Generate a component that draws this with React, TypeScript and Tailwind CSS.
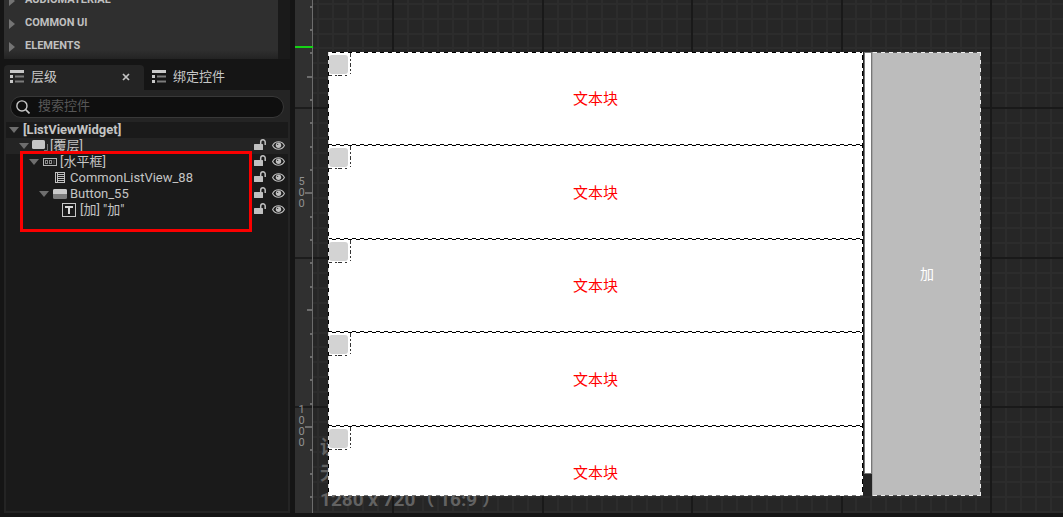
import React from "react";

const FONT = "font-['Roboto','Noto_Sans_CJK_SC',sans-serif]";

function ListIcon() {
  return (
    <svg width="14" height="13" viewBox="0 0 14 13" aria-hidden="true" className="shrink-0">
      <path d="M0 0h14v3H0zM0 5h3v3H0zM0 10h3v3H0z" fill="#c8c8c8" />
      <path d="M5 5.5h9v2H5zM5 10.5h9v2H5z" fill="#7c7c7c" />
    </svg>
  );
}

function Chevron() {
  return (
    <svg width="10" height="6" viewBox="0 0 10 6" aria-hidden="true">
      <path d="M0 0h10L5 6z" fill="#6e6e6e" />
    </svg>
  );
}

function OverlayIcon() {
  return (
    <svg width="14" height="12" viewBox="0 0 14 12" aria-hidden="true" className="overflow-visible">
      <rect x="0" y="0" width="13" height="9" rx="1.5" fill="#c6c6c6" />
      <path d="M15.500 4v6.500H12" fill="none" stroke="#777" />
    </svg>
  );
}

function HorizontalBoxIcon() {
  return (
    <svg width="14" height="12" viewBox="0 0 14 12" aria-hidden="true" className="overflow-visible">
      <rect x="1.500" y="2.500" width="13" height="7" fill="none" stroke="#b4b4b4" />
      <rect x="3.500" y="4.500" width="2" height="3" fill="none" stroke="#8c8c8c" />
      <rect x="7.500" y="4.500" width="2" height="3" fill="none" stroke="#8c8c8c" />
      <path d="M12 4v4" stroke="#555" />
    </svg>
  );
}

function ListViewIcon() {
  return (
    <svg width="14" height="12" viewBox="0 0 14 12" aria-hidden="true" className="overflow-visible">
      <rect x="3.500" y="0.500" width="9" height="10" fill="none" stroke="#c0c0c0" />
      <path d="M5.500 0v11M6 2.500h6M6 4.500h6M6 6.500h6M6 8.500h6" stroke="#c0c0c0" />
    </svg>
  );
}

function ButtonIcon() {
  return (
    <svg width="14" height="12" viewBox="0 0 14 12" aria-hidden="true" className="overflow-visible">
      <rect x="1" y="1" width="14" height="10" rx="1.5" fill="#7d7d7d" />
      <path d="M2.500 1h11A1.500 1.500 0 0 1 15 2.500V6H1V2.500A1.500 1.500 0 0 1 2.500 1z" fill="#cacaca" />
    </svg>
  );
}

function TextIcon() {
  return (
    <svg width="14" height="14" viewBox="0 0 14 14" aria-hidden="true" className="overflow-visible">
      <rect x="0.500" y="0.500" width="13" height="13" fill="none" stroke="#c8c8c8" />
      <path d="M3 3h8v2H8V11H6V5H3z" fill="#d8d8d8" />
    </svg>
  );
}

function UnlockIcon() {
  return (
    <svg width="12" height="11" viewBox="0 0 12 11" aria-hidden="true">
      <rect x="0" y="5" width="9" height="6" rx="0.5" fill="#c0c0c0" />
      <path d="M6.700 5.500V3a2.200 2.200 0 0 1 4.500 0v3" fill="none" stroke="#c0c0c0" strokeWidth="1.500" />
    </svg>
  );
}

function EyeIcon() {
  return (
    <svg width="13" height="9" viewBox="0 0 13 9" aria-hidden="true">
      <path d="M.6 4.500C3-.5 10-.5 12.400 4.500 10 9.500 3 9.500.6 4.500z" fill="none" stroke="#c0c0c0" strokeWidth="1.100" />
      <circle cx="6.500" cy="4.300" r="2.700" fill="#c0c0c0" />
      <circle cx="5.600" cy="3.400" r="0.700" fill="#444" />
    </svg>
  );
}

type Node = {
  label: string;
  indent: string;
  open?: boolean;
  icon?: React.ReactNode;
  root?: boolean;
  lit?: boolean;
};

const NODES: Node[] = [
  { label: "[ListViewWidget]", indent: "pl-[3px]", open: true, root: true },
  { label: "[覆层]", indent: "pl-[13px]", open: true, icon: <OverlayIcon />, lit: true },
  { label: "[水平框]", indent: "pl-[23px]", open: true, icon: <HorizontalBoxIcon /> },
  { label: "CommonListView_88", indent: "pl-[33px]", icon: <ListViewIcon /> },
  { label: "Button_55", indent: "pl-[33px]", open: true, icon: <ButtonIcon /> },
  { label: '[加] "加"', indent: "pl-[43px]", icon: <TextIcon /> },
];

function TreeRow({ node }: { node: Node }) {
  return (
    <li
      role="treeitem"
      className={`flex h-4 items-center pr-[3px] text-[13px] leading-4 text-[#c4c4c4] ${node.indent} ${node.lit ? "bg-[#242424]" : ""}`}
    >
      <span className="flex w-[10px] shrink-0 justify-center">{node.open && <Chevron />}</span>
      {node.icon && <span className="ml-[3px] flex w-[14px] shrink-0 items-center">{node.icon}</span>}
      <span className={`ml-1 grow whitespace-nowrap ${node.root ? "font-bold" : ""}`}>{node.label}</span>
      {!node.root && (
        <span className="flex items-center gap-[6px] pb-0.5">
          <button type="button" aria-label="锁定" className="pb-0.5">
            <UnlockIcon />
          </button>
          <button type="button" aria-label="可见性">
            <EyeIcon />
          </button>
        </span>
      )}
    </li>
  );
}

function Palette() {
  return (
    <section className="flex h-[59px] shrink-0 bg-[#1a1a1a]">
      <ul className="flex w-[274px] flex-col justify-end overflow-hidden bg-[linear-gradient(#2f2f2f_85%,#232323)] pb-px">
        {["AUDIOMATERIAL", "COMMON UI", "ELEMENTS"].map((name) => (
          <li key={name} className="flex h-[23px] shrink-0 items-center gap-[10px] pl-[5px] text-[11px] font-bold text-[#c0c0c0]">
            <svg width="6" height="10" viewBox="0 0 6 10" aria-hidden="true">
              <path d="M0 0l6 5-6 5z" fill="#747474" />
            </svg>
            {name}
          </li>
        ))}
      </ul>
    </section>
  );
}

function Hierarchy() {
  return (
    <section className="flex min-h-0 grow flex-col pt-[6px]">
      <div role="tablist" className="flex h-[25px] shrink-0 text-[13px] text-[#c8c8c8]">
        <div className="flex w-[140px] items-center rounded-t bg-[#242424] pr-[14px] pl-[6px]">
          <button type="button" role="tab" aria-selected="true" className="flex grow items-center gap-[7px] pb-0.5">
            <ListIcon />
            层级
          </button>
          <button type="button" aria-label="关闭" className="pb-0.5">
            <svg width="8" height="8" viewBox="0 0 8 8" aria-hidden="true">
              <path d="M1 1l6 6M7 1L1 7" stroke="#c4c4c4" strokeWidth="1.700" />
            </svg>
          </button>
        </div>
        <button type="button" role="tab" aria-selected="false" className="flex items-center gap-[7px] px-2 pb-0.5">
          <ListIcon />
          绑定控件
        </button>
      </div>
      <div className="flex min-h-0 grow flex-col bg-[#242424] px-0.5 pb-0.5">
        <label className="mx-1 mt-[6px] mb-1 flex h-[22px] shrink-0 items-center gap-2 rounded-full border border-[#383838] bg-[#0f0f0f] px-[5px]">
          <svg width="14" height="14" viewBox="0 0 13 13" aria-hidden="true" className="shrink-0">
            <circle cx="5.500" cy="5.500" r="4.700" fill="none" stroke="#c8c8c8" strokeWidth="1.300" />
            <path d="M9 9l3.500 3.500" stroke="#c8c8c8" strokeWidth="1.500" />
          </svg>
          <input
            type="text"
            aria-label="搜索控件"
            placeholder="搜索控件"
            className="min-w-0 grow bg-transparent pb-0.5 text-[13px] leading-4 text-[#c8c8c8] outline-none placeholder:text-[#575757]"
          />
        </label>
        <div className="relative grow bg-[#1a1a1a]">
          <ul role="tree">
            {NODES.map((node) => (
              <TreeRow key={node.label} node={node} />
            ))}
          </ul>
          <div className="pointer-events-none absolute top-[29px] left-[14px] h-[81px] w-[232px] border-[3px] border-[#fb0000]" />
        </div>
      </div>
    </section>
  );
}

const TICKS = Array.from({ length: 22 }, (_, i) => i - 8);

function Ruler() {
  return (
    <div className="relative w-[18px] shrink-0 overflow-hidden bg-[#303030] text-[11px] leading-[11px] text-[#909090]">
      <svg className="absolute inset-0 h-full w-full" aria-hidden="true" shapeRendering="crispEdges">
        {[107, 257, 406].map((y) => (
          <rect key={y} x="0" y={y} width="18" height="2" fill="#1c1c1c" />
        ))}
        {TICKS.map((n) => {
          const length = n % 10 === 0 ? 7 : n % 5 === 0 ? 5 : 2;
          return <rect key={n} x={17 - length} y={Math.round(192.4 + n * 23.36)} width={length} height="2" fill="#6c6c6c" />;
        })}
        <rect x="17" y="0" width="1" height="100%" fill="#6c6c6c" />
        <rect x="0" y="46" width="18" height="2" fill="#15d315" />
      </svg>
      <div className="absolute top-[176px] left-[3px] w-[7px] text-center break-all">500</div>
      <div className="absolute top-[404px] left-[3px] w-[7px] text-center break-all">1000</div>
    </div>
  );
}

const LINES = Array.from({ length: 120 }, (_, i) => i);

function Grid() {
  const minor = LINES.filter((i) => i % 10 !== 5);
  const major = LINES.filter((i) => i % 10 === 5);
  return (
    <svg className="absolute inset-0 h-full w-full" aria-hidden="true" shapeRendering="crispEdges">
      {minor.map((i) => (
        <g key={i} fill="#2c2c2c">
          <rect x={Math.round(4.3 + i * 14.95)} y="0" width="2" height="100%" />
          <rect x="0" y={Math.round(32.5 + (i - 10) * 14.95)} width="100%" height="2" />
        </g>
      ))}
      {major.map((i) => (
        <g key={i} fill="#191919">
          <rect x={Math.round(4.3 + i * 14.95)} y="0" width="2" height="100%" />
          <rect x="0" y={Math.round(32.5 + i * 14.95)} width="100%" height="2" />
        </g>
      ))}
    </svg>
  );
}

function Entry() {
  return (
    <li className="relative flex items-center justify-center text-[15px] text-[#ff0000]">
      <span>文本块</span>
      <span className="absolute top-0.5 left-px h-[19px] w-[19px] rounded-[3px] bg-[#d3d3d3]" />
      <span className="absolute top-0 left-[22px] h-[21px] w-px bg-[repeating-linear-gradient(#333_0_4px,#fff_4px_6px,#333_6px_8px,#fff_8px_10px)]" />
      <span className="absolute top-[22px] left-0 h-px w-[20px] bg-[repeating-linear-gradient(90deg,#333_0_4px,#fff_4px_7px,#333_7px_9px,#fff_9px_10px)]" />
      <span className="absolute inset-x-0 bottom-0 h-0.5 bg-[repeating-linear-gradient(90deg,#000_0_4px,#fff_4px_8px),repeating-linear-gradient(90deg,#fff_0_4px,#000_4px_8px)] bg-[size:100%_1px] bg-[position:0_0,0_1px] bg-no-repeat" />
    </li>
  );
}

function DesignSurface() {
  return (
    <div className="absolute top-[52px] left-[15px] flex h-[444px] w-[653px]">
      <div className="relative grow overflow-hidden bg-white">
        <ul className="grid h-[468px] grid-rows-5 pt-px">
          {[0, 1, 2, 3, 4].map((i) => (
            <Entry key={i} />
          ))}
        </ul>
        <span className="absolute inset-x-0 top-0 h-px bg-[repeating-linear-gradient(90deg,#fff_0_4px,#000_4px_8px)]" />
        <span className="absolute inset-y-0 left-0 w-px bg-[repeating-linear-gradient(#ddd_0_4px,#000_4px_8px)]" />
        <span className="absolute inset-y-0 right-0 w-px bg-[repeating-linear-gradient(#fff_0_3px,#000_3px_8px)]" />
        <span className="absolute inset-x-0 bottom-0 h-px bg-[repeating-linear-gradient(90deg,#fff_0_4px,#777_4px_8px)]" />
      </div>
      <div className="w-[9px] shrink-0 bg-[#242424]">
        <div className="ml-px h-[422px] border border-[#777] bg-white" />
      </div>
      <button type="button" className="relative w-[109px] shrink-0 border-l border-[#a4a4a4] bg-[#bcbcbc] text-[14px] text-white">
        加
        <span className="absolute inset-x-0 top-0 h-px bg-[repeating-linear-gradient(90deg,#ececec_0_4px,#555_4px_8px)]" />
        <span className="absolute inset-x-0 bottom-0 h-px bg-[repeating-linear-gradient(90deg,#ececec_0_4px,#555_4px_8px)]" />
        <span className="absolute inset-y-0 right-0 w-px bg-[repeating-linear-gradient(#ececec_0_4px,#555_4px_8px)]" />
      </button>
    </div>
  );
}

export default function App() {
  return (
    <div className={`flex h-screen gap-[5px] overflow-hidden bg-[#151515] pb-1 ${FONT}`}>
      <aside className="flex w-[290px] shrink-0 flex-col pl-1">
        <Palette />
        <Hierarchy />
      </aside>
      <main className="flex min-w-0 grow">
        <Ruler />
        <div className="relative grow overflow-hidden bg-[#262626]">
          <Grid />
          <div className="absolute bottom-0 left-[7px] text-[19px] leading-[26px] font-bold whitespace-nowrap text-[#626262]">
            <p>设</p>
            <p>无</p>
            <p>1280 x 720（ 16:9 ）</p>
          </div>
          <DesignSurface />
        </div>
      </main>
    </div>
  );
}
